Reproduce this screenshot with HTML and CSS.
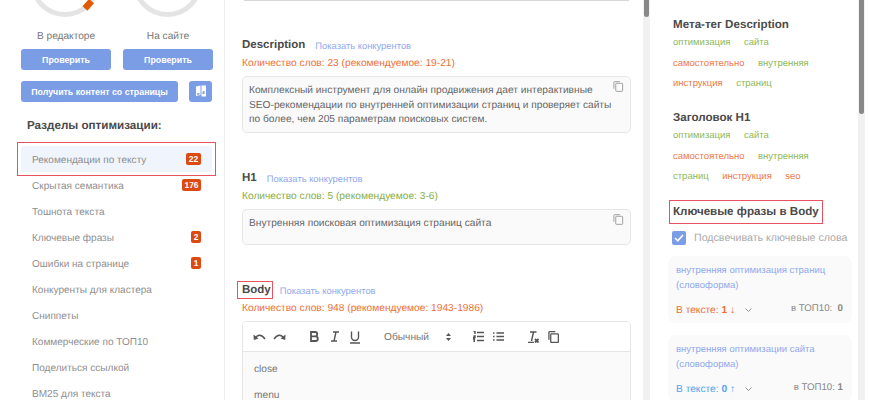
FILE: index.html
```html
<!DOCTYPE html>
<html lang="ru">
<head>
    <meta charset="UTF-8">
    <title>Рекомендации по тексту</title>
    <link rel="stylesheet" href="styles.css">
</head>
<body>
    <div class="layout">
        <aside class="sidebar">
            <svg class="gauges" viewBox="0 0 224 17">
                <circle class="gauge-ring" cx="65" cy="-18" r="32.5"/>
                <path class="gauge-mark" d="M91.500 1 L85 8.500"/>
                <circle class="gauge-ring" cx="167.500" cy="-18" r="32.5"/>
            </svg>
            <div class="check-grid">
                <div class="check-col">
                    <div class="check-label">В редакторе</div>
                    <button class="btn btn-check">Проверить</button>
                </div>
                <div class="check-col">
                    <div class="check-label">На сайте</div>
                    <button class="btn btn-check">Проверить</button>
                </div>
            </div>
            <div class="fetch-row">
                <button class="btn btn-fetch">Получить контент со страницы</button>
                <button class="btn btn-icon" aria-label="Книга">
                    <svg width="12" height="13" viewBox="0 0 12 13">
                        <path fill="#fff" d="M1 1.500 L5.500 .5 V10 L1 11 Z M6.500 .5 H11 V11.500 H6.500 Z"/>
                        <path fill="#7b9de6" d="M7.500 7 L9.500 5.500 V9 H7.500 Z M2 8.500 L4.500 8 V9.500 L2 10 Z"/>
                    </svg>
                </button>
            </div>
            <h3 class="menu-title">Разделы оптимизации:</h3>
            <ul class="menu">
                <li class="menu-marked"><div class="menu-item active">Рекомендации по тексту <span class="badge">22</span></div></li>
                <li class="menu-item">Скрытая семантика <span class="badge badge-wide">176</span></li>
                <li class="menu-item">Тошнота текста</li>
                <li class="menu-item">Ключевые фразы <span class="badge">2</span></li>
                <li class="menu-item">Ошибки на странице <span class="badge">1</span></li>
                <li class="menu-item">Конкуренты для кластера</li>
                <li class="menu-item">Сниппеты</li>
                <li class="menu-item">Коммерческие по ТОП10</li>
                <li class="menu-item">Поделиться ссылкой</li>
                <li class="menu-item">BM25 для текста</li>
            </ul>
        </aside>

        <main class="main">
            <div class="prev-box"></div>

            <div class="field-head first">
                <span class="field-title">Description</span>
                <a class="field-link">Показать конкурентов</a>
            </div>
            <div class="count bad">Количество слов: 23 (рекомендуемое: 19-21)</div>
            <div class="text-box tall">
                Комплексный инструмент для онлайн продвижения дает интерактивные SEO-рекомендации по внутренней оптимизации страниц и проверяет сайты по более, чем 205 параметрам поисковых систем.
                <svg class="copy-icon" viewBox="0 0 12 12"><path d="M1 8.500 V1.500 A.8 .8 0 0 1 1.800 .7 H7.500"/><rect x="3" y="2.500" width="7.500" height="8.800" rx=".8"/></svg>
            </div>

            <div class="field-head">
                <span class="field-title">H1</span>
                <a class="field-link">Показать конкурентов</a>
            </div>
            <div class="count good">Количество слов: 5 (рекомендуемое: 3-6)</div>
            <div class="text-box short">
                Внутренняя поисковая оптимизация страниц сайта
                <svg class="copy-icon" viewBox="0 0 12 12"><path d="M1 8.500 V1.500 A.8 .8 0 0 1 1.800 .7 H7.500"/><rect x="3" y="2.500" width="7.500" height="8.800" rx=".8"/></svg>
            </div>

            <div class="field-head">
                <span class="field-title marked-body">Body</span>
                <a class="field-link">Показать конкурентов</a>
            </div>
            <div class="count bad">Количество слов: 948 (рекомендуемое: 1943-1986)</div>
            <div class="editor">
                <div class="toolbar">
                    <svg class="tool tool-undo" width="13" height="9" viewBox="0 0 13 9"><path class="tool-line" d="M2 6.500 C4.500 2 8.500 2 12 7"/><path class="tool-fill" d="M.5 2.500 L.8 8 L5.500 6.500 Z"/></svg>
                    <svg class="tool tool-redo" width="13" height="9" viewBox="0 0 13 9"><path class="tool-line" d="M11 6.500 C8.500 2 4.500 2 1 7"/><path class="tool-fill" d="M12.500 2.500 L12.200 8 L7.500 6.500 Z"/></svg>
                    <svg class="tool tool-bold" width="9" height="11" viewBox="0 0 9 11"><path class="tool-line heavy" d="M1 1 H5 A2.200 2.200 0 0 1 5 5.400 H1 Z M1 5.400 H5.500 A2.300 2.300 0 0 1 5.500 10 H1 Z"/></svg>
                    <svg class="tool tool-italic" width="8" height="11" viewBox="0 0 8 11"><path class="tool-line" d="M2 1 H8 M0 10 H6 M5 1 L3 10"/></svg>
                    <svg class="tool tool-underline" width="10" height="13" viewBox="0 0 10 13"><path class="tool-line" d="M1.500 .5 V6 A3.500 3.500 0 0 0 8.500 6 V.5 M0 12 H10"/></svg>
                    <span class="tool-select">Обычный</span>
                    <svg class="tool tool-arrows" width="5" height="8" viewBox="0 0 5 8"><path class="tool-fill" d="M2.500 0 L5 3 H0 Z M2.500 8 L5 5 H0 Z"/></svg>
                    <svg class="tool tool-ol" width="11" height="11" viewBox="0 0 11 11"><path class="tool-line" d="M4 1.500 H11 M4 5.500 H11 M4 9.500 H11 M.5 .5 H2 V3 M.5 5 H2 V6.500 H.5 V8 H2 M.5 9.500 H2 M.5 11 H2"/></svg>
                    <svg class="tool tool-ul" width="11" height="9" viewBox="0 0 11 9"><path class="tool-line" d="M3.500 1 H11 M3.500 4.500 H11 M3.500 8 H11 M0 1 H1.500 M0 4.500 H1.500 M0 8 H1.500"/></svg>
                    <svg class="tool tool-clean" width="11" height="12" viewBox="0 0 11 12"><path class="tool-line" d="M2 1 H8.500 M5.500 1 L3.500 10 M0 11.500 H6"/><path class="tool-line heavy" d="M7 8 L10.500 11.500 M10.500 8 L7 11.500"/></svg>
                    <svg class="tool tool-copy" width="11" height="12" viewBox="0 0 12 13"><path class="tool-line" d="M1 9.500 V1.500 A.8 .8 0 0 1 1.800 .7 H8"/><rect class="tool-line" x="3" y="3" width="8.300" height="9.500" rx=".8"/></svg>
                </div>
                <div class="editor-body">
                    <p>close</p>
                    <p>menu</p>
                </div>
            </div>
        </main>

        <div class="scrollbar"><div class="thumb thumb-main"></div></div>

        <section class="keywords">
            <h4 class="kw-title first">Мета-тег Description</h4>
            <div class="tags">
                <span class="tag ok">оптимизация</span>
                <span class="tag ok">сайта</span>
                <span class="tag miss">самостоятельно</span>
                <span class="tag ok">внутренняя</span>
                <span class="tag miss">инструкция</span>
                <span class="tag ok">страниц</span>
            </div>
            <h4 class="kw-title">Заголовок H1</h4>
            <div class="tags">
                <span class="tag ok">оптимизация</span>
                <span class="tag ok">сайта</span>
                <span class="tag miss">самостоятельно</span>
                <span class="tag ok">внутренняя</span>
                <span class="tag ok">страниц</span>
                <span class="tag miss">инструкция</span>
                <span class="tag miss">seo</span>
            </div>
            <h4 class="kw-title marked-kw">Ключевые фразы в Body</h4>
            <label class="highlight">
                <span class="checkbox">
                    <svg width="10" height="8" viewBox="0 0 10 8"><path d="M1 4 L3.800 6.800 L9 1"/></svg>
                </span>
                Подсвечивать ключевые слова
            </label>
            <div class="kw-card">
                <div class="kw-name">внутренняя оптимизация страниц (словоформа)</div>
                <div class="kw-stats">
                    <span class="kw-count low">В тексте: <b>1 ↓</b></span>
                    <svg class="chevron" width="7" height="4" viewBox="0 0 7 4"><path d="M.5 .5 L3.500 3.500 L6.500 .5"/></svg>
                    <span class="kw-top">в ТОП10: &nbsp;<b>0</b></span>
                </div>
            </div>
            <div class="kw-card">
                <div class="kw-name">внутренняя оптимизации сайта (словоформа)</div>
                <div class="kw-stats">
                    <span class="kw-count high">В тексте: <b>0 ↑</b></span>
                    <svg class="chevron" width="7" height="4" viewBox="0 0 7 4"><path d="M.5 .5 L3.500 3.500 L6.500 .5"/></svg>
                    <span class="kw-top">в ТОП10: <b>1</b></span>
                </div>
            </div>
        </section>

        <div class="scrollbar"><div class="thumb thumb-side"></div></div>
    </div>
</body>
</html>
```

FILE: styles.css
```css
:root {
    --blue: #7b9de6;
    --link: #8fa9ee;
    --orange: #ee6f35;
    --green: #86ae45;
    --badge: #dc4a12;
    --red-line: #e8535f;
    --text: #666;
    --title: #4a4a4a;
    --box: #fafafa;
    --line: #e6e6e6;
}

* {
    margin: 0;
    padding: 0;
    box-sizing: border-box;
}

html, body {
    height: 400px;
    overflow: hidden;
}

body {
    font-family: 'Liberation Sans', Arial, sans-serif;
    text-rendering: geometricPrecision;
    background-color: white;
    color: var(--text);
}

.layout {
    display: flex;
    height: 400px;
    overflow: hidden;
}

/* left column */
.sidebar {
    flex: 0 0 225px;
    border-right: 1px solid #efefef;
    overflow: hidden;
}

.gauges {
    display: block;
    width: 224px;
    height: 17px;
}

.gauge-ring {
    fill: none;
    stroke: #e4e4e4;
    stroke-width: 5;
}

.gauge-mark {
    fill: none;
    stroke: #e25a00;
    stroke-width: 6.500;
}

.check-grid {
    display: flex;
    gap: 12px;
    padding: 13px 0 0 21px;
}

.check-col {
    width: 90px;
}

.check-label {
    font-size: 10.150px;
    line-height: 14px;
    text-align: center;
    color: #777;
    margin-bottom: 5px;
}

.btn {
    display: block;
    height: 21px;
    border: none;
    border-radius: 3px;
    background-color: var(--blue);
    color: white;
    font-family: inherit;
    font-size: 8.800px;
    font-weight: 700;
}

.btn-check {
    width: 100%;
}

.fetch-row {
    display: flex;
    gap: 11px;
    padding: 11px 0 0 21px;
}

.btn-fetch {
    width: 157px;
}

.btn-icon {
    width: 23px;
    display: flex;
    align-items: center;
    justify-content: center;
}

.menu-title {
    font-size: 11.650px;
    line-height: 16px;
    color: var(--title);
    margin: 16px 0 12px 27px;
}

.menu {
    list-style: none;
    margin-left: 21px;
    width: 191px;
}

.menu-item {
    display: flex;
    align-items: center;
    justify-content: space-between;
    height: 26px;
    padding: 2px 11px 0;
    font-size: 10.050px;
    color: #8f8f8f;
}

.menu-marked {
    outline: 1px solid var(--red-line);
    outline-offset: 3px;
}

.menu-item.active {
    background-color: #f0f4fc;
    border-radius: 3px;
}

.badge {
    min-width: 10px;
    height: 12px;
    margin-top: -2px;
    padding: 0 2px;
    border-radius: 2px;
    background-color: var(--badge);
    color: white;
    font-size: 8.500px;
    font-weight: 700;
    line-height: 12px;
    text-align: center;
}

.active .badge {
    width: 15px;
}

.badge-wide {
    width: 19px;
}

/* middle column */
.main {
    flex: 0 0 418px;
    padding: 0 12px 0 17px;
    overflow: hidden;
}

.prev-box {
    height: 1px;
    margin: 0 2px;
    background-color: #d8d8d8;
}

.field-head {
    display: flex;
    align-items: center;
    height: 16px;
    margin-top: 37px;
}

.field-head.first {
    margin-top: 36px;
}

.field-title {
    font-size: 11.500px;
    font-weight: 700;
    color: var(--title);
    margin-right: 10px;
}

.field-link {
    font-size: 9.400px;
    color: var(--link);
}

.marked-body {
    padding: 2px 1px 2px 4px;
    margin: 0 8px 0 -4px;
    outline: 1px solid var(--red-line);
}

.count {
    font-size: 10.200px;
    line-height: 14px;
    margin: 4px 0 5px;
}

.count.bad {
    color: var(--orange);
}

.count.good {
    color: var(--green);
}

.text-box {
    position: relative;
    padding: 7px 18px 0 6px;
    font-size: 10.200px;
    line-height: 14.670px;
    background-color: var(--box);
    border: 1px solid var(--line);
    border-radius: 5px;
}

.text-box.tall {
    height: 57px;
}

.text-box.short {
    height: 36px;
}

.copy-icon {
    position: absolute;
    top: 4px;
    right: 6px;
    width: 11px;
    height: 11px;
    fill: none;
    stroke: #999;
    stroke-width: 1;
}

.editor {
    height: 200px;
    border: 1px solid var(--line);
    border-radius: 5px;
    overflow: hidden;
}

.toolbar {
    display: flex;
    align-items: center;
    height: 30px;
    padding-left: 10px;
    border-bottom: 1px solid var(--line);
    background-color: white;
}

.tool {
    flex: none;
    display: block;
}

.tool-line {
    fill: none;
    stroke: #555;
    stroke-width: 1.400;
}

.tool-line.heavy {
    stroke-width: 1.800;
}

.tool-fill {
    fill: #555;
}

.tool-redo {
    margin-left: 7px;
}

.tool-bold {
    margin-left: 24px;
}

.tool-italic {
    margin-left: 12px;
}

.tool-underline {
    margin: 1px 0 0 11px;
}

.tool-select {
    font-size: 10.200px;
    color: #777;
    margin: 2px 0 0 24px;
    width: 62px;
}

.tool-ol {
    margin-left: 25px;
}

.tool-arrows {
    margin-right: -3px;
}

.tool-ul {
    margin-left: 9px;
}

.tool-clean {
    margin-left: 24px;
}

.tool-copy {
    margin-left: 9px;
}

.editor-body {
    height: 170px;
    padding: 11px 11px;
    background-color: var(--box);
    font-size: 10.200px;
    line-height: 14px;
    color: #777;
}

.editor-body p {
    margin-bottom: 12px;
}

/* scrollbars */
.scrollbar {
    flex: 0 0 7px;
    background-color: #f1f1f1;
    position: relative;
}

.thumb {
    width: 5px;
    margin-left: 1px;
    background-color: #888;
    border-radius: 0 0 3px 3px;
}

.thumb-main {
    height: 17px;
}

.thumb-side {
    height: 114px;
}

/* right column */
.keywords {
    flex: 0 0 208px;
    padding-left: 23px;
    overflow: hidden;
}

.kw-title {
    font-size: 11.600px;
    line-height: 16px;
    color: var(--title);
    margin-top: 19px;
    margin-bottom: 3px;
}

.kw-title.first {
    margin-top: 17px;
}

.marked-kw {
    width: max-content;
    margin-top: 20px;
    margin-bottom: 11px;
    outline: 1px solid var(--red-line);
    outline-offset: 3px;
}

.tags {
    display: flex;
    flex-wrap: wrap;
    gap: 6.500px 13.500px;
    width: 160px;
}

.tag {
    font-size: 9.500px;
    line-height: 14px;
}

.tag.ok {
    color: #8fb858;
}

.tag.miss {
    color: #ef7a48;
}

.highlight {
    display: flex;
    align-items: center;
    height: 14px;
    font-size: 10.650px;
    color: #aaa;
    white-space: nowrap;
    margin-left: -1px;
}

.checkbox {
    display: flex;
    align-items: center;
    justify-content: center;
    width: 14px;
    height: 14px;
    margin-right: 8px;
    background-color: var(--blue);
    border-radius: 2px;
}

.checkbox svg {
    fill: none;
    stroke: white;
    stroke-width: 1.600;
}

.kw-card {
    width: 184px;
    height: 67px;
    margin: 11px 0 12px -5px;
    padding: 7px 8px 6px;
    background-color: var(--box);
    border-radius: 8px;
}

.kw-card + .kw-card {
    margin-top: 0;
}

.kw-name {
    font-size: 9.500px;
    line-height: 15px;
    color: var(--link);
    width: 160px;
}

.kw-stats {
    display: flex;
    align-items: center;
    margin-top: 10px;
    height: 14px;
    font-size: 10.200px;
}

.kw-count.low {
    color: var(--orange);
}

.kw-count.high {
    color: #4fa3ee;
}

.chevron {
    margin-left: 10px;
    fill: none;
    stroke: #999;
}

.kw-top {
    margin-left: auto;
    margin-top: -4px;
    margin-right: 1px;
    font-size: 9.700px;
    color: #888;
}
```
